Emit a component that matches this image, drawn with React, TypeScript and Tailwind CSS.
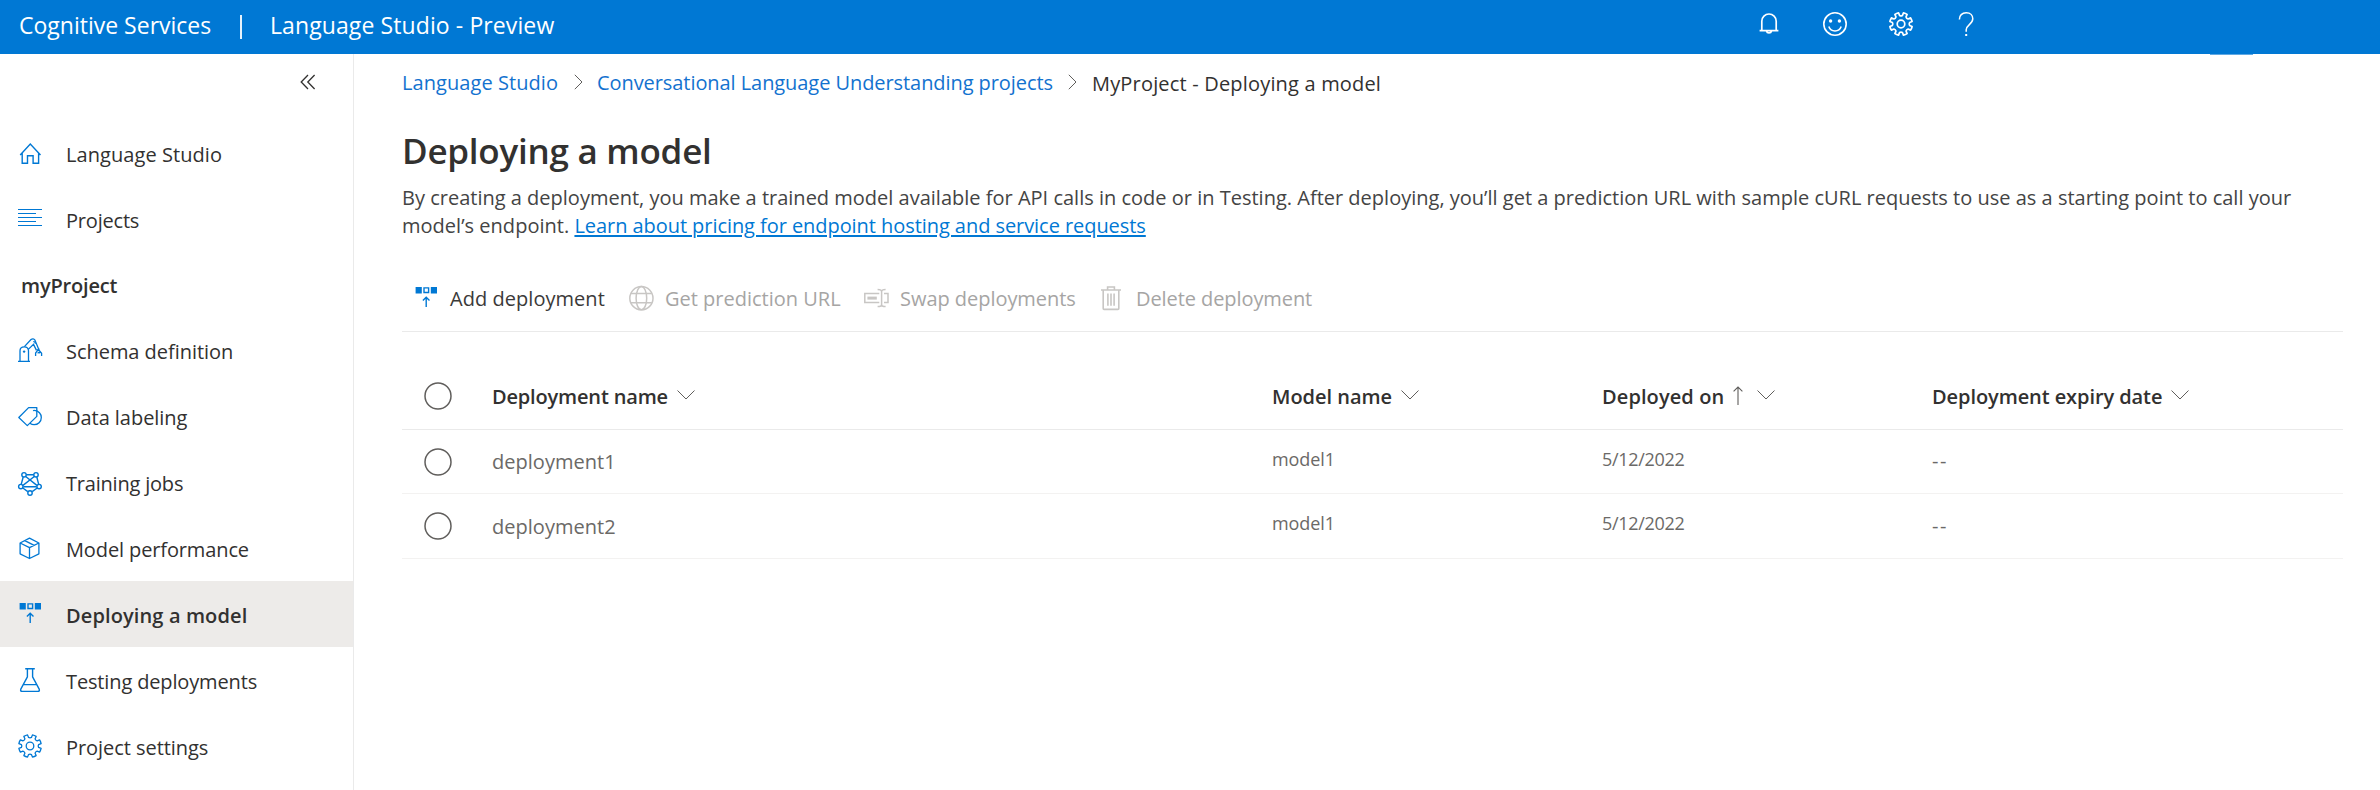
import type { ReactNode } from "react";

/* Outline of an eight-toothed cog centred on (12, 12). */
function gearPath() {
  const pt = (r: number, deg: number) => {
    const a = (deg * Math.PI) / 180;
    return `${(12 + r * Math.cos(a)).toFixed(2)} ${(12 + r * Math.sin(a)).toFixed(2)}`;
  };
  let d = "";
  for (let i = 0; i < 8; i++) {
    const c = 22.5 + i * 45;
    d += `${i === 0 ? "M" : "L"}${pt(8.7, c - 13)} L${pt(11.4, c - 10)} A11.4 11.4 0 0 1 ${pt(11.4, c + 10)} L${pt(8.7, c + 13)} A3 3 0 0 0 ${pt(8.7, c + 32)} `;
  }
  return d + "Z";
}
const GEAR = gearPath();

function Icon({ children, className = "", sw = 1.4 }: { children: ReactNode; className?: string; sw?: number }) {
  return (
    <svg
      width="24"
      height="24"
      viewBox="0 0 24 24"
      fill="none"
      stroke="currentColor"
      strokeWidth={sw}
      className={`block shrink-0 overflow-visible ${className}`}
    >
      {children}
    </svg>
  );
}

const GearIcon = ({ className = "", sw = 1.4 }: { className?: string; sw?: number }) => (
  <Icon className={className} sw={sw}>
    <path d={GEAR} strokeLinejoin="round" />
    <circle cx="12" cy="12" r="3.8" />
  </Icon>
);

const HomeIcon = () => (
  <Icon>
    <path d="M2.2 14 12.3 3l10.2 11M4.2 12v10.3h5.3v-7.6h5.6v7.6h5.5V12" />
  </Icon>
);

const ProjectsIcon = () => (
  <Icon sw={1}>
    <path d="M0 2.5h24M0 6.5h18M0 10.5h24M0 14.5h18M0 18.5h24" />
  </Icon>
);

const SchemaIcon = () => (
  <Icon sw={1.3}>
    <path d="M0 23.3h12M2 23V12.8q0-4 4.2-4t4.3 4V23" />
    <circle cx="6.1" cy="13.6" r="1.2" fill="currentColor" stroke="none" />
    <path d="M6.4 8.6 13 1.6q2.2-1.8 4 .6l3.8 9.2M10.3 11.4l5.2-5 3 6" />
    <path d="M15.3 3.6a1.6 1.6 0 0 1 1.8 2.2M17.6 18v-3l2-2.6h1.6l2.4 2.8V18M18.8 12l2.8-.9M19.6 15.2l1.4-1 1.3.9" />
  </Icon>
);

const LabelIcon = () => (
  <Icon sw={1.3}>
    <path d="M.8 13.5 10.6 3.6h8.2v8.8L9.3 21.6Z" strokeLinejoin="round" />
    <path d="M15.4 7.2q.2-1 1.2-.8c4 .4 6.7 3.6 6.7 7 0 4.4-3.4 7.3-7.2 7.3-1.8 0-2.8-.4-4.2-1.4" />
  </Icon>
);

const TrainingIcon = () => (
  <Icon sw={1.4}>
    <path d="M8.2 4.8h7.6M5.2 7 3.2 14.4M18.8 7l1.9 7.4M5.4 16.8h13.2M4.8 18l5 3.6M19.2 18l-5 3.6M7.7 6.5 18.9 15.4M16.3 6.5 5 15.4" />
    <circle cx="6" cy="4.8" r="2.2" />
    <circle cx="18" cy="4.8" r="2.2" />
    <circle cx="2.8" cy="16.6" r="2.2" />
    <circle cx="21.1" cy="16.6" r="2.2" />
    <circle cx="12" cy="23" r="2.2" />
  </Icon>
);

const CubeIcon = () => (
  <Icon sw={1.3}>
    <path d="M11.5 2.2 20.9 7v10.8l-9.4 4.7L2.1 17.8V7ZM2.1 7l9.4 4.7L20.9 7M11.5 11.7v10.6M6.8 4.6l9.4 4.8" strokeLinejoin="round" />
  </Icon>
);

const DeployIcon = () => (
  <Icon sw={1.4}>
    <path d="M1.6 1h6.2v6.4H1.6zM16.8 1H23v6.4h-6.2z" fill="currentColor" stroke="none" />
    <path d="M10 1.9h4.6v4.6H10zM12.2 21V11.4M8.9 14.4l3.3-3.2 3.3 3.2" />
  </Icon>
);

const FlaskIcon = () => (
  <Icon sw={1.4}>
    <path d="M7.2.8h9.6M9.4.8v8L2.8 21.2q-.8 2 1.4 2.2h15.6q2.2-.2 1.4-2.2L14.6 8.8v-8M5.4 16.6h13.2" strokeLinejoin="round" />
  </Icon>
);

const GlobeIcon = () => (
  <Icon sw={1.5}>
    <circle cx="12.4" cy="12.2" r="11.6" />
    <ellipse cx="12.4" cy="12.2" rx="5.3" ry="11.6" />
    <path d="M2 7.6h20.8M2 16.8h20.8" />
  </Icon>
);

const SwapIcon = () => (
  <Icon sw={1.5}>
    <path d="M15.3 7.6H.8v9h14.5M20 7.6h4v9h-4M13.6 3.6q4 0 4 2.2v12.6q0 2.2-4 2.2M21.6 3.6q-4 0-4 2.2v12.6q0 2.2 4 2.2" />
    <path d="M3.4 12.1h9.4" strokeWidth="3" />
  </Icon>
);

const TrashIcon = () => (
  <Icon sw={1.6}>
    <path d="M2 4h20M8.6 3.6V1h6.8v2.6M4.2 4v18.6q0 .8.8.8h14q.8 0 .8-.8V4M8.9 7.4v12.4M12 7.4v12.4M15.1 7.4v12.4" />
  </Icon>
);

const ChevronDown = ({ className = "" }: { className?: string }) => (
  <svg width="18" height="10" viewBox="0 0 18 10" fill="none" stroke="#605e5c" className={`block shrink-0 ${className}`}>
    <path d="M.5.5 9 9 17.5.5" />
  </svg>
);

const Crumb = ({ className = "" }: { className?: string }) => (
  <svg width="9" height="16" viewBox="0 0 9 16" fill="none" stroke="#605e5c" className={`block shrink-0 ${className}`}>
    <path d="M.8.8 8 8 .8 15.2" />
  </svg>
);

const Radio = () => (
  <svg width="28" height="28" viewBox="0 0 28 28" fill="none" stroke="#605e5c" strokeWidth="1.5" className="ml-[22px] block">
    <circle cx="14" cy="14" r="13" />
  </svg>
);

function NavItem({ icon, label, text = "", selected = false }: { icon: ReactNode; label: string; text?: string; selected?: boolean }) {
  return (
    <a className={`flex h-[66px] shrink-0 items-center pl-[18px] ${selected ? "bg-[#edebe9]" : ""}`}>
      <span className="text-[#0078d4]">{icon}</span>
      <span className={`ml-[24px] pt-[3px] leading-[28px] whitespace-nowrap ${selected ? "font-semibold text-[#323130]" : ""} ${text}`}>
        {label}
      </span>
    </a>
  );
}

function Row({ name, first = false }: { name: string; first?: boolean }) {
  return (
    <div className={`grid grid-cols-[90px_780px_330px_330px_1fr] items-center border-b border-[#f3f2f1] text-[#6b6967] ${first ? "h-[64px]" : "h-[65px]"}`}>
      <Radio />
      <span className={`tracking-[0.03px] ${first ? "" : "pt-[2px]"}`}>{name}</span>
      <span className="pb-[6px] text-[18px] tracking-[-0.1px]">model1</span>
      <span className="pb-[6px] text-[18px] tracking-[-0.3px]">5/12/2022</span>
      <span className="pb-[1px] tracking-[1.6px]">--</span>
    </div>
  );
}

export default function App() {
  return (
    <div className="flex h-[790px] w-[2380px] flex-col overflow-hidden bg-white font-['Open_Sans','Noto_Sans',sans-serif] text-[20px] leading-[28px] text-[#323130]">
      <header className="relative flex h-[54px] shrink-0 items-center bg-[#0078d4] text-[23px] text-white">
        <span className="ml-[19px] w-[221px] pb-[4px] whitespace-nowrap">Cognitive Services</span>
        <span className="h-[24px] w-[2px] bg-white/90" />
        <span className="ml-[28px] pb-[4px] tracking-[0.1px] whitespace-nowrap">Language Studio - Preview</span>
        <div className="absolute top-[12px] left-[1757px] flex gap-[42px]">
          <Icon sw={1.7}>
            <path d="M2.6 18.6h18.8M4.8 18.6V9.2a7.2 7.2 0 0 1 14.4 0v9.4M9.4 19a2.7 2.7 0 0 0 5.2 0" />
          </Icon>
          <Icon sw={1.6}>
            <circle cx="12" cy="12" r="11.2" />
            <path d="M5.8 14.6q1.6 4.4 6.2 4.4t6.2-4.4" />
            <circle cx="7.6" cy="9" r="1.7" fill="currentColor" stroke="none" />
            <circle cx="16.4" cy="9" r="1.7" fill="currentColor" stroke="none" />
          </Icon>
          <GearIcon sw={1.7} />
          <Icon sw={1.5}>
            <path d="M4.4 7.4c0-4 2.6-6.6 6.8-6.6s6.6 2.6 6.6 6c0 5.4-6.6 6.2-6.6 11v2" />
            <path d="M10.2 22h2v2h-2z" fill="currentColor" stroke="none" />
          </Icon>
        </div>
        <span className="absolute top-[54px] left-[2210px] h-px w-[43px] bg-[#5fa9e4]" />
      </header>

      <div className="flex min-h-0 flex-1">
        <nav className="flex w-[354px] shrink-0 flex-col border-r border-[#eaeaea]">
          <div className="flex h-[66px] shrink-0 items-start justify-end pt-[20px] pr-[37px]">
            <svg width="16" height="16" viewBox="0 0 16 16" fill="none" stroke="#323130" strokeWidth="1.3">
              <path d="M8 1 1.2 8 8 15M14.6 1 7.8 8l6.8 7" />
            </svg>
          </div>
          <NavItem icon={<HomeIcon />} label="Language Studio" text="tracking-[0.07px]" />
          <NavItem icon={<ProjectsIcon />} label="Projects" text="tracking-[-0.2px]" />
          <div className="flex h-[65px] shrink-0 items-center pt-[2px] pl-[21px] font-semibold tracking-[-0.18px]">myProject</div>
          <NavItem icon={<SchemaIcon />} label="Schema definition" text="tracking-[-0.04px]" />
          <NavItem icon={<LabelIcon />} label="Data labeling" text="tracking-[-0.04px]" />
          <NavItem icon={<TrainingIcon />} label="Training jobs" text="tracking-[-0.2px]" />
          <NavItem icon={<CubeIcon />} label="Model performance" text="tracking-[-0.12px]" />
          <NavItem icon={<DeployIcon />} label="Deploying a model" text="tracking-[0.12px]" selected />
          <NavItem icon={<FlaskIcon />} label="Testing deployments" text="tracking-[-0.14px]" />
          <NavItem icon={<GearIcon sw={1.3} />} label="Project settings" text="tracking-[-0.05px]" />
        </nav>

        <main className="flex flex-1 flex-col pt-[14px] pr-[37px] pl-[48px]">
          <div className="flex h-[28px] items-center whitespace-nowrap">
            <a className="w-[172px] pt-[1px] tracking-[0.07px] text-[#1372cf]">Language Studio</a>
            <Crumb />
            <a className="ml-[14px] w-[471px] pt-[1px] tracking-[-0.07px] text-[#1372cf]">Conversational Language Understanding projects</a>
            <Crumb />
            <span className="ml-[15px] pt-[3px] tracking-[0.18px]">MyProject - Deploying a model</span>
          </div>

          <h1 className="mt-[31px] text-[35px] leading-[48px] font-semibold tracking-[-0.25px]">Deploying a model</h1>

          <p className="mt-[9px] h-[56px] whitespace-nowrap text-[#444]">
            <span className="tracking-[0.004px]">
              By creating a deployment, you make a trained model available for API calls in code or in Testing. After deploying, you’ll get a prediction URL with sample cURL requests to use as a starting point to call your
            </span>
            <br />
            <span className="tracking-[0.02px]">model’s endpoint. </span>
            <a className="tracking-[-0.06px] text-[#0078d4] underline decoration-2 underline-offset-[2px]">Learn about pricing for endpoint hosting and service requests</a>
          </p>

          <div className="mt-[25px] flex h-[67px] items-center border-b border-[#eaeaea] pl-[12px] whitespace-nowrap">
            <div className="flex w-[215px] items-center gap-[12px]">
              <span className="text-[#0078d4]"><DeployIcon /></span>
              <span className="pt-[2px] tracking-[0.04px] text-[#3b3a39]">Add deployment</span>
            </div>
            <div className="flex w-[235px] items-center gap-[12px] text-[#a6a5a4]">
              <span className="text-[#c8c6c4]"><GlobeIcon /></span>
              <span className="pt-[2px]">Get prediction URL</span>
            </div>
            <div className="flex w-[235px] items-center gap-[12px] text-[#a6a5a4]">
              <span className="text-[#c8c6c4]"><SwapIcon /></span>
              <span className="pt-[2px] tracking-[-0.04px]">Swap deployments</span>
            </div>
            <div className="flex items-center gap-[13px] text-[#a6a5a4]">
              <span className="text-[#c8c6c4]"><TrashIcon /></span>
              <span className="pt-[2px] tracking-[-0.08px]">Delete deployment</span>
            </div>
          </div>

          <div className="mt-[30px] grid h-[68px] grid-cols-[90px_780px_330px_330px_1fr] items-center border-b border-[#eaeaea] font-semibold whitespace-nowrap">
            <Radio />
            <span className="flex items-center">
              <span className="w-[185px] pt-[2px] tracking-[-0.17px]">Deployment name</span>
              <ChevronDown className="-mt-[2px]" />
            </span>
            <span className="flex items-center">
              <span className="w-[129px] pt-[2px] tracking-[-0.03px]">Model name</span>
              <ChevronDown className="-mt-[2px]" />
            </span>
            <span className="flex items-center">
              <span className="w-[131px] pt-[2px] tracking-[0.1px]">Deployed on</span>
              <svg width="10" height="19" viewBox="0 0 10 19" fill="none" stroke="#605e5c" strokeWidth="1.1">
                <path d="M5 19V1M.6 5.4 5 1l4.4 4.4" />
              </svg>
              <ChevronDown className="-mt-[2px] ml-[14px]" />
            </span>
            <span className="flex items-center">
              <span className="w-[239px] pt-[2px] tracking-[-0.08px]">Deployment expiry date</span>
              <ChevronDown className="-mt-[2px]" />
            </span>
          </div>
          <Row name="deployment1" first />
          <Row name="deployment2" />
        </main>
      </div>
    </div>
  );
}
